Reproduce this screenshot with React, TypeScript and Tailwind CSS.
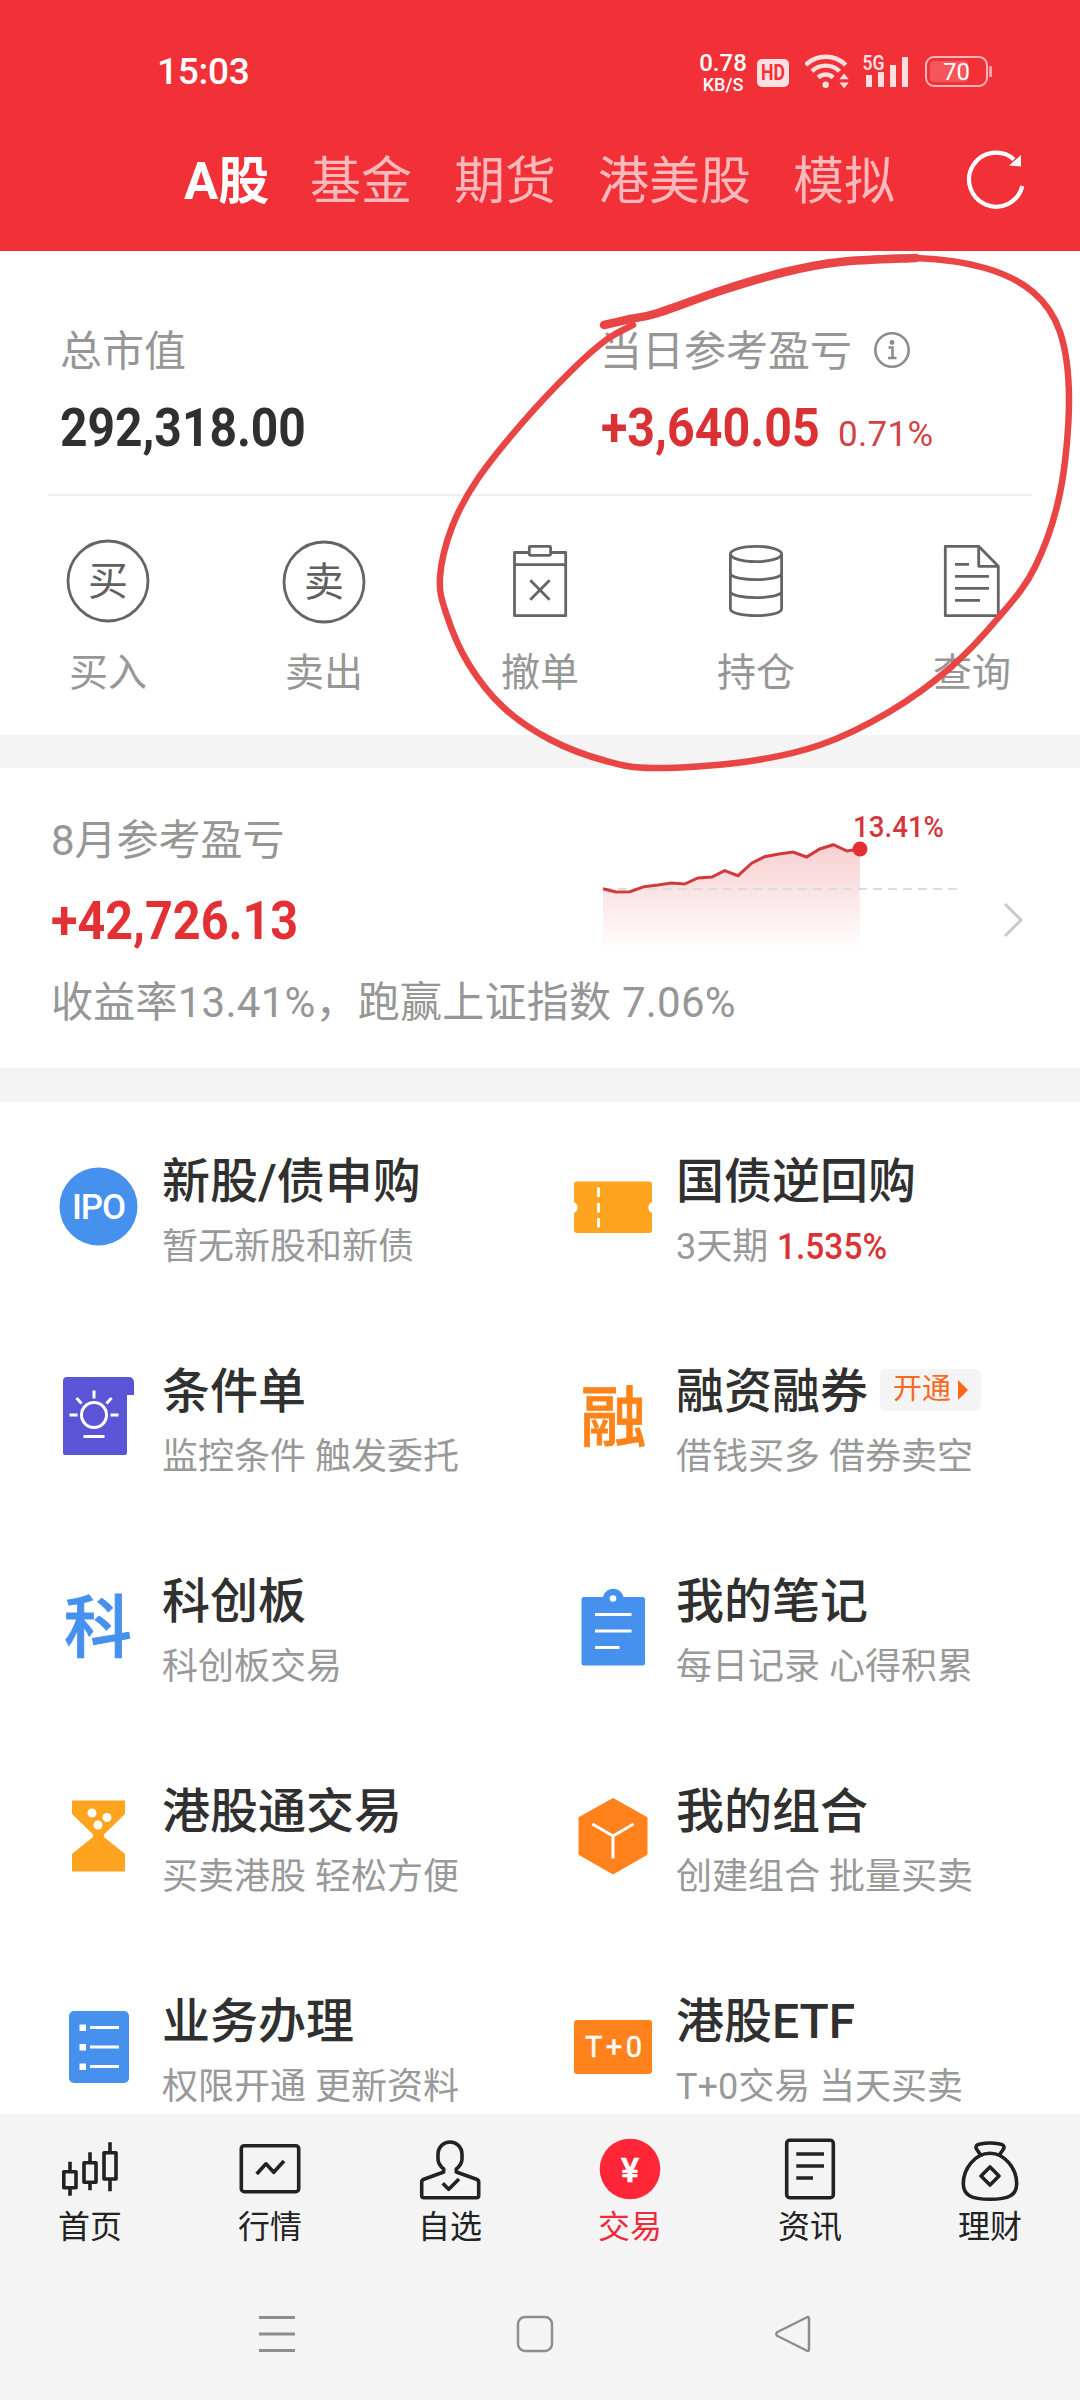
import { FC, ReactNode } from 'react'

interface FeatureProps {
    title: string
    desc: ReactNode
    icon: ReactNode
    tag?: string
}

const tabs = ['基金', '期货', '港美股', '模拟']

// cumulative return for the month, one point per trading day
const chartPoints: [number, number][] = [
    [1, 72.7], [14, 76], [28, 75.7], [42, 70.7], [56, 69], [69.5, 67], [82.6, 68], [96, 62],
    [110, 61], [122.6, 54.7], [136, 59.7], [150, 47], [162.6, 40.7], [177, 38], [191, 36],
    [204.6, 41], [217.7, 33], [231.4, 28.7], [245, 35], [258, 33],
]

const markerPoints: [number, number][] = [
    [604, 75], [630, 69], [658, 63], [723, 40], [785, 22], [840, 12], [916, 8], [985, 18], [1033, 42],
    [1060, 82], [1069, 150], [1060, 243], [1035, 317], [999, 367], [950, 418], [889, 462],
    [820, 495], [744, 512], [654, 518], [606, 511], [551, 490], [503, 457], [468, 413],
    [446, 363], [440, 327], [452, 277], [477, 230], [523, 172], [572, 120], [606, 90], [633, 75],
]

// Catmull-Rom through the points, written as cubic beziers
const smooth = (pts: [number, number][]) => {
    let d = `M${pts[0][0]} ${pts[0][1]}`
    for (let i = 0; i < pts.length - 1; i++) {
        const p0 = pts[i - 1] || pts[i]
        const p1 = pts[i]
        const p2 = pts[i + 1]
        const p3 = pts[i + 2] || p2
        d += `C${p1[0] + (p2[0] - p0[0]) / 6} ${p1[1] + (p2[1] - p0[1]) / 6} ${p2[0] - (p3[0] - p1[0]) / 6} ${p2[1] - (p3[1] - p1[1]) / 6} ${p2[0]} ${p2[1]}`
    }
    return d
}

const StatusBar = () => (
    <div className="flex h-[105px] items-start pt-[53px] pl-[157px] text-white">
        <div className="w-[541px] text-[37px] leading-[38px] font-medium tracking-[-0.3px]">15:03</div>
        <div className="flex w-[50px] flex-col items-center font-medium">
            <span className="text-[24px] leading-[21px]">0.78</span>
            <span className="mt-[2px] text-[18px] leading-[17px]">KB/S</span>
        </div>
        <div className="mt-[6px] ml-[9px] flex h-[28px] w-[32px] items-center justify-center rounded-[5px] bg-[#fde0e1]">
            <span className="scale-x-[0.8] text-[22px] leading-none font-bold text-[#f23037]">HD</span>
        </div>
        <svg className="ml-[16px]" width="44" height="36" viewBox="0 0 44 36" fill="none" stroke="#fddfe0" strokeWidth="4.4">
            <path d="M.6 12a28.5 28.5 0 0 1 40.2 0M6.9 18.3a19.5 19.5 0 0 1 27.6 0M13.3 24.6a10.5 10.5 0 0 1 14.8 0" />
            <circle cx="20.7" cy="31.8" r="3.2" fill="#fddfe0" stroke="none" />
            <path d="M34.5 26.2l4.6-5.6 4.6 5.6zM34.5 29.6l4.6 5.6 4.6-5.6z" fill="#fddfe0" stroke="none" />
        </svg>
        <svg className="ml-[13px] overflow-visible" width="50" height="36" viewBox="0 0 50 36">
            <text x="0.5" y="16.5" fontSize="20" fontWeight="600" fill="#fddfe0" textLength="22" lengthAdjust="spacingAndGlyphs">5G</text>
            <path d="M4 22h6v12H4zM16 19h6v15h-6zM28 12h6v22h-6zM40 4h6v30h-6z" fill="#fddfe0" />
        </svg>
        <svg className="ml-[13px]" width="68" height="36" viewBox="0 0 68 36">
            <rect x="1" y="4" width="61" height="29" rx="8" fill="none" stroke="#fbb5b8" strokeWidth="2" />
            <rect x="5" y="8" width="38" height="21" rx="4" fill="#f5565c" />
            <path d="M65.500 13v11" stroke="#fbb5b8" strokeWidth="2.600" />
            <text x="31.500" y="27" fontSize="24" textAnchor="middle" fill="#fff">70</text>
        </svg>
    </div>
)

const Header = () => (
    <header className="h-[251px] bg-[#f23037]">
        <StatusBar />
        <div className="flex h-[145px] items-start pl-[184px]">
            <div className="mt-[42px] flex h-[70px] w-[126px] items-center text-[51px] font-bold text-white">A股</div>
            <div className="mt-[42px] flex h-[70px] w-[654px] items-center gap-[42px] text-[51px] text-[#fbb9bc]">
                {tabs.map((t) => (
                    <span key={t}>{t}</span>
                ))}
            </div>
            <svg className="mt-[42px]" width="64" height="64" viewBox="0 0 64 64">
                <path d="M58.300 39A27 27 0 1 1 50 12.500" fill="none" stroke="#fff" strokeWidth="4.200" />
                <path d="M57 8v11.500l-12-1z" fill="#fff" />
            </svg>
        </div>
    </header>
)

const Summary = () => (
    <section className="h-[484px] bg-white">
        <div className="flex h-[243px] pt-[72px] pl-[60px]">
            <div className="w-[541px]">
                <div className="flex h-[54px] items-center text-[42px] text-[#969696]">
                    <span className="relative top-[1px]">总市值</span>
                </div>
                <div className="mt-[20px] h-[62px] origin-left scale-x-[0.905] text-[53px] leading-[62px] font-bold text-[#303030]">292,318.00</div>
            </div>
            <div>
                <div className="flex h-[54px] items-center text-[42px] text-[#969696]">
                    <span className="relative top-[1px] -left-[1px]">当日参考盈亏</span>
                    <svg className="ml-[19px]" width="40" height="40" viewBox="0 0 40 40" fill="none" stroke="#8c8c8c" strokeWidth="2.600">
                        <circle cx="20" cy="20" r="16.700" />
                        <path d="M16.500 17.500h4v10M16 28h8.500" />
                        <circle cx="20" cy="12.500" r="2.400" fill="#8c8c8c" stroke="none" />
                    </svg>
                </div>
                <div className="mt-[20px] flex h-[62px] items-baseline">
                    <span className="w-[237px] origin-left scale-x-[0.912] text-[53px] leading-[62px] font-bold text-[#d93134]">+3,640.05</span>
                    <span className="text-[35px] tracking-[0.3px] text-[#d24347]">0.71%</span>
                </div>
            </div>
        </div>
        <div className="mx-[48px] h-[2px] bg-[#efefef]" />
        <div className="grid grid-cols-5 pt-[44px] text-[39px] text-[#969696]">
            <Action label="买入">
                <circle cx="41" cy="41" r="40" />
                <text x="41" y="55" fontSize="40" textAnchor="middle" fill="#606060" stroke="none">买</text>
            </Action>
            <Action label="卖出">
                <circle cx="41" cy="42" r="40" />
                <text x="41" y="56" fontSize="40" textAnchor="middle" fill="#606060" stroke="none">卖</text>
            </Action>
            <Action label="撤单">
                <path d="M30.300 12.500H15.500v63.200h51.200V12.500H51.600M15.500 24.700h51.200M31.300 40.300l19.300 19.400M50.600 40.300L31.300 59.700" />
                <rect x="30.300" y="6.300" width="21.300" height="9" rx="1" />
            </Action>
            <Action label="持仓">
                <ellipse cx="41" cy="14" rx="25.600" ry="7.700" />
                <path d="M15.400 14v54.700c0 9.300 51.200 9.300 51.200 0V14M15.400 33.700c2 8 49.200 8 51.200 0M15.400 51.700c2 8 49.200 8 51.200 0" />
            </Action>
            <Action label="查询">
                <path d="M14.300 6.300h33.400l19.600 20v49.400h-53zM47.700 6.300v20h19.600M24 24.300h14M24 36.300h34M24 48.300h34M24 60.300h25" />
            </Action>
        </div>
    </section>
)

const Action: FC<{ label: string; children: ReactNode }> = ({ label, children }) => (
    <div className="flex flex-col items-center">
        <svg className="overflow-visible" width="82" height="82" viewBox="0 0 82 82" fill="none" stroke="#656565" strokeWidth="2.800" strokeLinejoin="round">
            {children}
        </svg>
        <span className="mt-[24px] flex h-[54px] items-center">{label}</span>
    </div>
)

const ProfitChart = () => {
    const line = chartPoints.map((p) => p.join(' ')).join('L')
    return (
        <svg className="overflow-visible" width="370" height="140" viewBox="0 0 370 140">
            <defs>
                <linearGradient id="profit" x1="0" y1="0" x2="0" y2="1">
                    <stop offset="0" stopColor="#f8cfd0" />
                    <stop offset="1" stopColor="#fff" />
                </linearGradient>
            </defs>
            <path d={`M${line}V135H1z`} fill="url(#profit)" />
            <path d="M1 73h354" stroke="#dcdcdc" strokeWidth="2" strokeDasharray="9 6" />
            <path d={`M${line}`} fill="none" stroke="#d03a3d" strokeWidth="3" />
            <circle cx="258" cy="33" r="7.500" fill="#e53033" />
            <text x="251" y="21" fontSize="29" fontWeight="500" fill="#d43539" textLength="91" lengthAdjust="spacingAndGlyphs">13.41%</text>
        </svg>
    )
}

const MonthProfit = () => (
    <section className="flex h-[300px] bg-white pl-[51px]">
        <div className="w-[551px] pt-[44px] whitespace-nowrap">
            <div className="flex h-[54px] items-center text-[42px] text-[#969696]">
                <span className="relative top-[1px]">8月参考盈亏</span>
            </div>
            <div className="mt-[24px] h-[62px] origin-left scale-x-[0.915] text-[53px] leading-[62px] font-bold text-[#e23034]">+42,726.13</div>
            <div className="mt-[22px] flex h-[54px] items-center text-[42px] tracking-[0.25px] text-[#969696]">
                <span className="relative top-[1px]">收益率13.41%，跑赢上证指数 7.06%</span>
            </div>
        </div>
        <div className="pt-[48px]">
            <ProfitChart />
        </div>
        <svg className="mt-[132px] ml-[28px]" width="28" height="40" viewBox="0 0 28 40">
            <path d="M5 4l16 16L5 36" fill="none" stroke="#c8c8c8" strokeWidth="3" />
        </svg>
    </section>
)

const features: FeatureProps[] = [
    {
        title: '新股/债申购',
        desc: '暂无新股和新债',
        icon: (
            <>
                <circle cx="39.500" cy="39.500" r="39" fill="#4691ed" />
                <text x="13" y="52" fontSize="35" fontWeight="500" fill="#fff" textLength="54">IPO</text>
            </>
        ),
    },
    {
        title: '国债逆回购',
        desc: <>3天期 <span className="inline-block origin-left scale-x-[0.93] font-medium text-[#d93336]">1.535%</span></>,
        icon: (
            <>
                <path d="M4 14.500h72a3 3 0 0 1 3 3V35a6 6 0 0 0 0 11v17a3 3 0 0 1-3 3H4a3 3 0 0 1-3-3V46a6 6 0 0 0 0-11V17.500a3 3 0 0 1 3-3z" fill="#ffa41f" />
                <path d="M25.500 20.500v9.500M25.500 36v9.500M25.500 51v9.500" stroke="#fff" strokeWidth="2.800" />
            </>
        ),
    },
    {
        title: '条件单',
        desc: '监控条件 触发委托',
        icon: (
            <>
                <path d="M8 0h62a5 5 0 0 1 5 5v13h-7v58a2 2 0 0 1-2 2H6a2 2 0 0 1-2-2V4a4 4 0 0 1 4-4z" fill="#5a55d6" />
                <g fill="none" stroke="#fff" strokeWidth="3">
                    <circle cx="35" cy="38" r="12.500" />
                    <path d="M35 13.500v8M17.500 21l5 5.500M52.500 21l-5 5.500M10.500 38h8M51.500 38h8M24.500 59.500h21" />
                </g>
            </>
        ),
    },
    {
        title: '融资融券',
        desc: '借钱买多 借券卖空',
        tag: '开通',
        icon: <text x="40.500" y="64" fontSize="66" fontWeight="500" textAnchor="middle" fill="#ff8319" stroke="#ff8319" strokeWidth="0.800">融</text>,
    },
    {
        title: '科创板',
        desc: '科创板交易',
        icon: <text x="39" y="64.500" fontSize="68" fontWeight="500" textAnchor="middle" fill="#4691ed" stroke="#4691ed" strokeWidth="0.800">科</text>,
    },
    {
        title: '我的笔记',
        desc: '每日记录 心得积累',
        icon: (
            <>
                <path d="M11 10h19a10.500 10.500 0 0 1 20.500 0H69.500a2.500 2.500 0 0 1 2.500 2.500V76a2.500 2.500 0 0 1-2.500 2.500H11A2.500 2.500 0 0 1 8.500 76V12.500A2.500 2.500 0 0 1 11 10z" fill="#4691ed" />
                <circle cx="40" cy="11.500" r="3.300" fill="#fff" />
                <path d="M22 27.500h36.500M22 44h36.500M22 60.500h24.500" stroke="#fff" strokeWidth="3" />
            </>
        ),
    },
    {
        title: '港股通交易',
        desc: '买卖港股 轻松方便',
        icon: (
            <>
                <path d="M13 3.500h53v13.500L45 37.500v2.500L66 57v17.500H13V57L34 40v-2.500L13 17z" fill="#ffa41f" />
                <g fill="#fff">
                    <circle cx="33" cy="16" r="4.500" />
                    <circle cx="48" cy="20.500" r="4.500" />
                    <circle cx="39" cy="28" r="4.500" />
                </g>
            </>
        ),
    },
    {
        title: '我的组合',
        desc: '创建组合 批量买卖',
        icon: (
            <>
                <path d="M40 1.500L74 20.500v37L40 77 6 57.500v-37z" fill="#ff821c" stroke="#ff821c" strokeLinejoin="round" />
                <path d="M19.500 27L40 39l20.500-12M40 39v22.500" fill="none" stroke="#fff" strokeWidth="3" />
            </>
        ),
    },
    {
        title: '业务办理',
        desc: '权限开通 更新资料',
        icon: (
            <>
                <rect x="10" y="4" width="60" height="72" rx="5" fill="#4691ed" />
                <path d="M20.500 17.500h6.500v6.500h-6.500zM20.500 37h6.500v6.500h-6.500zM20.500 56.500h6.500v6.500h-6.500z" fill="#fff" />
                <path d="M31 20.500h29M31 40h29M31 59.500h29" stroke="#fff" strokeWidth="2.800" />
            </>
        ),
    },
    {
        title: '港股ETF',
        desc: 'T+0交易 当天买卖',
        icon: (
            <>
                <rect x="1" y="13" width="78" height="54" rx="3" fill="#ff821c" />
                <text x="12" y="50" fontSize="29" fill="#fff" stroke="#fff" strokeWidth="0.500" textLength="57">T+0</text>
            </>
        ),
    },
]

const Feature: FC<FeatureProps> = ({ title, desc, icon, tag }) => (
    <div className="flex h-[210px] gap-[23px] pt-[50px] pl-[59px]">
        <svg className="mt-[15px] shrink-0 overflow-visible" width="80" height="80" viewBox="0 0 80 80">
            {icon}
        </svg>
        <div className="whitespace-nowrap">
            <div className="flex h-[60px] items-center text-[48px] font-medium text-[#303030]">
                {title}
                {tag && (
                    <span className="relative -top-[2px] ml-[12px] flex h-[42px] w-[101px] items-center rounded-[6px] bg-[#f4f4f4] pl-[13px] text-[29px] font-normal text-[#f8691f]">
                        {tag}
                        <svg className="ml-[7px]" width="10" height="20" viewBox="0 0 10 20">
                            <path d="M0 0l10 10L0 20z" fill="#ff661a" />
                        </svg>
                    </span>
                )}
            </div>
            <div className="mt-[10px] flex h-[50px] items-center text-[36px] text-[#999]">
                <span>{desc}</span>
            </div>
        </div>
    </div>
)

const NavItem: FC<{ label: string; active?: boolean; children: ReactNode }> = ({ label, active, children }) => (
    <div className={active ? 'flex flex-col items-center text-[#ee2a3b]' : 'flex flex-col items-center text-[#222]'}>
        <svg width="64" height="68" viewBox="0 0 64 68" fill="none" stroke="#222" strokeWidth="3.600" strokeLinejoin="round">
            {children}
        </svg>
        <span className="mt-[1px] flex h-[44px] items-center text-[32px]">{label}</span>
    </div>
)

const BottomNav = () => (
    <nav className="grid h-[158px] grid-cols-6 pt-[22px]">
        <NavItem label="首页">
            <path d="M5.800 35.700H18v16H5.800zM12 25.700v10M12 51.700v8M26 26.700h12v19.600H26zM32 16.300v10.400M32 46.300v8M46 16.700h12V43H46zM52 6.300v10.400M52 43v12.300" />
        </NavItem>
        <NavItem label="行情">
            <rect x="3.300" y="9.700" width="57.400" height="46" rx="3" />
            <path d="M18.700 38l9.300-10.200 7.700 8.500L46 25" />
        </NavItem>
        <NavItem label="自选">
            <path d="M25.700 36v-3C22 30 20 27.500 20 23v-5a12 12 0 0 1 24 0v5c0 4.500-2 7-5.700 10v3L58.500 43.300q2.200.8 2.200 3V59.500q0 2.200-2.200 2.200H6q-2.300 0-2.300-2.200V46.300q0-2.200 2.200-3z" />
            <path d="M24.700 47.300l6 6L41 43" />
        </NavItem>
        <NavItem label="交易" active>
            <circle cx="32" cy="33" r="30.300" fill="#ff2638" stroke="none" />
            <text x="32" y="46" fontSize="34" fontWeight="500" textAnchor="middle" fill="#fff" stroke="#fff" strokeWidth="0.600">¥</text>
        </NavItem>
        <NavItem label="资讯">
            <rect x="8.700" y="4.300" width="46.600" height="57.400" rx="3" />
            <path d="M18.300 18H46M18.300 30H46M18.300 42H35" />
        </NavItem>
        <NavItem label="理财">
            <path d="M32 17.300C17 17.300 5.300 33 5.300 47.500 5.300 59 13 63.300 32 63.300S58.700 59 58.700 47.500C58.700 33 47 17.300 32 17.300z" />
            <path d="M23 19.500l-4.500-6.500c-1.500-3 .5-4.500 3.500-5 6-1.200 14-1.200 20 0 3 .5 5 2 3.500 5L41 19.500M32 31l9 9-9 9-9-9z" />
        </NavItem>
    </nav>
)

const SystemNav = () => (
    <div className="flex h-[128px] justify-center gap-[218px] pt-[42px] pr-[11px]">
        <svg width="40" height="40" viewBox="0 0 40 40" stroke="#8d8d8d" strokeWidth="3">
            <path d="M2 3.500h36M2 20h36M2 36.500h36" />
        </svg>
        <svg width="40" height="40" viewBox="0 0 40 40" fill="none" stroke="#8d8d8d" strokeWidth="2.500">
            <rect x="3" y="3" width="34" height="34" rx="7" />
        </svg>
        <svg width="40" height="40" viewBox="0 0 40 40" fill="none" stroke="#8d8d8d" strokeWidth="2.500" strokeLinejoin="round">
            <path d="M33.500 3.500Q36 2 36 5v30q0 3-2.500 1.500L4.500 22q-2.500-2 0-4z" />
        </svg>
    </div>
)

const App = () => (
    <div className="relative h-[2400px] w-[1080px] overflow-hidden bg-[#f4f4f4] font-[Roboto,'Noto_Sans_CJK_SC',sans-serif]">
        <Header />
        <Summary />
        <div className="h-[33px]" />
        <MonthProfit />
        <div className="h-[34px]" />
        <section className="grid h-[1012px] grid-cols-[514px_1fr] content-start overflow-hidden bg-white">
            {features.map((f) => (
                <Feature key={f.title} {...f} />
            ))}
        </section>
        <BottomNav />
        <SystemNav />
        {/* hand-drawn marker over the daily profit */}
        <svg className="absolute top-[250px] left-0" width="1080" height="540" viewBox="0 0 1080 540" fill="none" stroke="#e94545" strokeLinecap="round" strokeLinejoin="round">
            <path d={smooth(markerPoints)} strokeWidth="6.500" />
            <path d={smooth(markerPoints.slice(0, 7))} strokeWidth="8.500" />
        </svg>
    </div>
)

export default App
